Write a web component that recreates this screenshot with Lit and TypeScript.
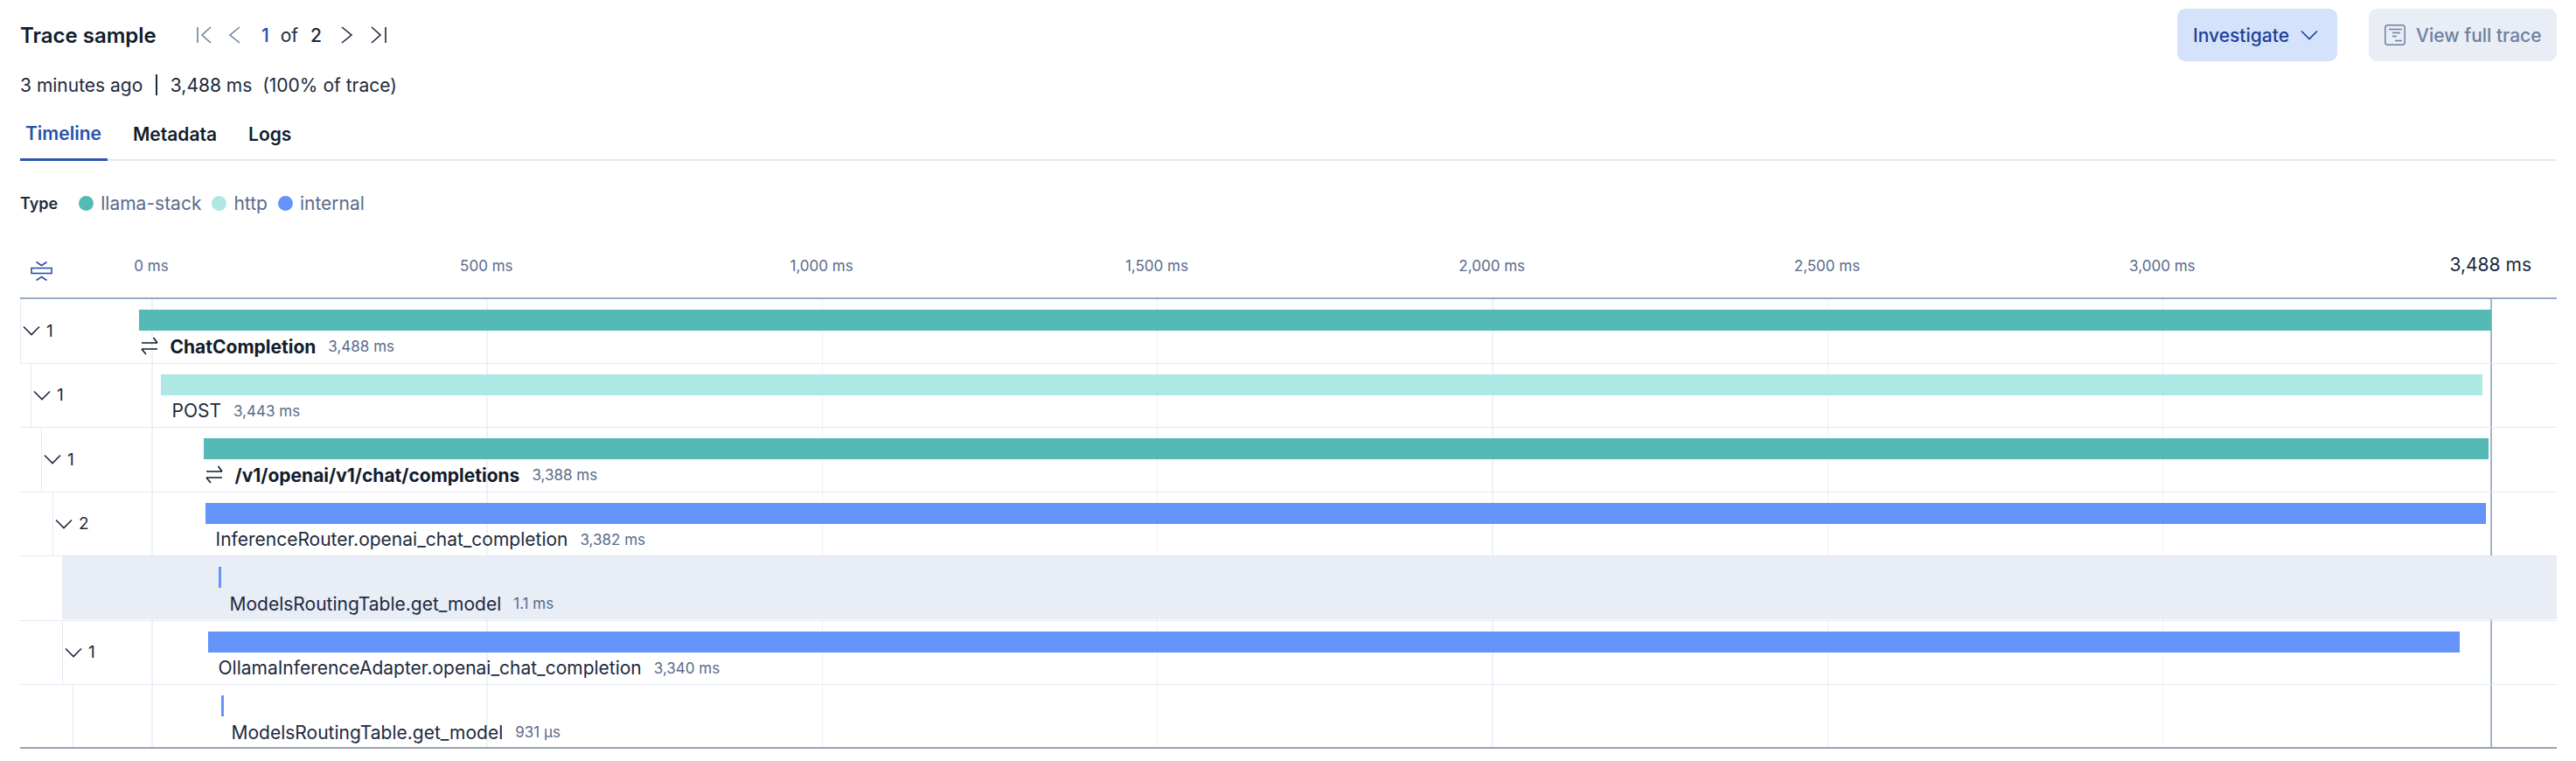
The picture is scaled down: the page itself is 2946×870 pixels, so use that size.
import { LitElement, html, css, svg } from 'lit';
import { customElement } from 'lit/decorators.js';

type Span = {
  indent: number;
  count?: number;
  color: string;
  x: number;
  end: number;
  labelX: number;
  name: string;
  duration: string;
  bold?: boolean;
  swap?: boolean;
  selected?: boolean;
};

const TEAL = '#55b9b5';
const MINT = '#ade8e4';
const BLUE = '#6494fa';
const LANE_X = 150;

const spans: Span[] = [
  { indent: 23, count: 1, color: TEAL, x: 159, end: 2849, labelX: 161, name: 'ChatCompletion', duration: '3,488 ms', bold: true, swap: true },
  { indent: 35, count: 1, color: MINT, x: 184, end: 2839, labelX: 197, name: 'POST', duration: '3,443 ms' },
  { indent: 47, count: 1, color: TEAL, x: 233, end: 2846, labelX: 235, name: '/v1/openai/v1/chat/completions', duration: '3,388 ms', bold: true, swap: true },
  { indent: 60, count: 2, color: BLUE, x: 235, end: 2843, labelX: 247, name: 'InferenceRouter.openai_chat_completion', duration: '3,382 ms' },
  { indent: 71, color: BLUE, x: 250, end: 253, labelX: 263, name: 'ModelsRoutingTable.get_model', duration: '1.1 ms', selected: true },
  { indent: 71, count: 1, color: BLUE, x: 238, end: 2813, labelX: 250, name: 'OllamaInferenceAdapter.openai_chat_completion', duration: '3,340 ms' },
  { indent: 83, color: BLUE, x: 253, end: 256, labelX: 265, name: 'ModelsRoutingTable.get_model', duration: '931 µs' },
];

const ticks = ['0 ms', '500 ms', '1,000 ms', '1,500 ms', '2,000 ms', '2,500 ms', '3,000 ms'];
const legend = [
  { label: 'llama-stack', color: TEAL },
  { label: 'http', color: MINT },
  { label: 'internal', color: BLUE },
];
const tickX = (i: number) => 150 + i * 383.3;

const chevron = (points: string) => html`<svg class="nav-icon" viewBox="0 0 24 24" fill="none" stroke="currentColor" stroke-width="1.6">${svg`<path d=${points}/>`}</svg>`;

@customElement('app-root')
export class AppRoot extends LitElement {
  static styles = css`
    :host {
      display: block;
      width: 2946px;
      height: 870px;
      box-sizing: border-box;
      padding: 10px 22px 0 23px;
      background: #fff;
      font-family: Inter, 'Liberation Sans', sans-serif;
      font-size: 21px;
      color: #1d2a3e;
    }
    svg {
      display: block;
      flex: none;
    }
    .top {
      display: flex;
      align-items: center;
      height: 60px;
    }
    .title {
      font-size: 24px;
      font-weight: 600;
      color: #111c2c;
      width: 202px;
    }
    .pager {
      display: flex;
      align-items: center;
      color: #1d2a3e;
    }
    .nav-icon {
      width: 24px;
      height: 24px;
    }
    .muted-icon {
      color: #6f80a0;
    }
    .gap-prev {
      width: 6px;
    }
    .gap-last {
      width: 13px;
    }
    .current {
      color: #2b4fa8;
      font-weight: 500;
      margin-left: 20px;
    }
    .of {
      margin-left: 13px;
    }
    .total {
      font-weight: 500;
      margin-left: 14px;
      margin-right: 16px;
    }
    .actions {
      margin-left: auto;
      display: flex;
      gap: 36px;
    }
    .btn {
      display: flex;
      align-items: center;
      height: 60px;
      border-radius: 9px;
      box-sizing: border-box;
      font-weight: 500;
    }
    .btn.primary {
      width: 183px;
      padding-left: 18px;
      gap: 13px;
      background: #d4e3fb;
      color: #1f3f98;
    }
    .btn.disabled {
      width: 215px;
      padding-left: 18px;
      gap: 12px;
      background: #e9edf5;
      color: #6f80a0;
    }
    .meta {
      display: flex;
      align-items: center;
      height: 32px;
      margin-top: 11px;
      white-space: pre;
    }
    .divider {
      width: 1.5px;
      height: 24px;
      background: #1d2a3e;
      margin: 0 15px;
    }
    .tabs {
      display: flex;
      height: 58px;
      margin-top: 13px;
      box-sizing: border-box;
      border-bottom: 2px solid #e3e8f2;
    }
    .tab {
      box-sizing: border-box;
      height: 58px;
      padding: 0 7px 3px 6px;
      display: flex;
      align-items: center;
      font-weight: 600;
      color: #111c2c;
      margin-right: 23px;
    }
    .tab.active {
      color: #2b4fa8;
      border-bottom: 3px solid #2d55b5;
    }
    .legend {
      display: flex;
      align-items: center;
      height: 30px;
      margin-top: 33px;
      color: #5a6b8c;
    }
    .legend b {
      font-weight: 600;
      color: #1d2a3e;
      margin-right: 24px;
      font-size: 18px;
    }
    .legend-item {
      display: flex;
      align-items: center;
      gap: 8px;
      margin-right: 12px;
    }
    .dot {
      width: 17px;
      height: 17px;
      border-radius: 50%;
    }
    .axis {
      position: relative;
      height: 95px;
      box-sizing: border-box;
      border-bottom: 2px solid #98a8c8;
    }
    .collapse {
      position: absolute;
      left: 12px;
      top: 51px;
      color: #2b4fa8;
    }
    .tick {
      position: absolute;
      top: 46px;
      font-size: 17px;
      line-height: 22px;
      color: #5a6b8c;
      transform: translateX(-50%);
      white-space: nowrap;
    }
    .total-tick {
      position: absolute;
      right: 29px;
      top: 42px;
      font-size: 21px;
      line-height: 28px;
    }
    .rows {
      position: relative;
      border-bottom: 2px solid #98a2b3;
    }
    .gridline {
      position: absolute;
      top: 0;
      bottom: 0;
      width: 1.5px;
      background: #eef1f6;
    }
    .endline {
      position: absolute;
      top: 0;
      bottom: 0;
      left: 2825px;
      width: 2px;
      background: #a8b3c9;
    }
    .row {
      position: relative;
      display: flex;
      height: 73.5px;
      box-sizing: border-box;
      border-bottom: 1.5px solid #e3e8f2;
    }
    .row:last-of-type {
      height: 71px;
      border-bottom: none;
    }
    .row-inner {
      flex: 1;
      display: flex;
      min-width: 0;
      border-left: 1.5px solid #e3e8f2;
    }
    .row-inner.selected {
      background: #e8edf6;
      border-left-color: #e8edf6;
      margin-bottom: 1px;
    }
    .toggle {
      display: flex;
      align-items: center;
      gap: 6px;
      box-sizing: border-box;
      flex: none;
      padding: 0 0 0 1px;
      font-size: 19px;
    }
    .lane {
      flex: 1;
      min-width: 0;
      padding-top: 12px;
    }
    .bar {
      height: 24px;
    }
    .label {
      display: flex;
      align-items: center;
      height: 30px;
      margin-top: 3px;
      white-space: nowrap;
    }
    .name.bold {
      font-weight: 700;
      color: #111c2c;
    }
    .swap {
      margin-right: 14px;
      color: #111c2c;
    }
    .duration {
      font-size: 17px;
      color: #5a6b8c;
      margin-left: 14px;
    }
  `;

  renderRow(s: Span) {
    const offset = s.indent - 23;
    const toggleWidth = LANE_X + 23 - s.indent - 1.5;
    const selected = s.selected ? 'row-inner selected' : 'row-inner';
    return html`
      <div class="row" style="padding-left:${offset}px">
        <div class=${selected}>
          <div class="toggle" style="width:${toggleWidth}px">
            ${s.count
              ? html`<svg width="22" height="22" viewBox="0 0 22 22" fill="none" stroke="#1d2a3e" stroke-width="1.6"><path d="M2 6.5l9 9 9-9"/></svg><span>${s.count}</span>`
              : ''}
          </div>
          <div class="lane">
            <div class="bar" style="margin-left:${s.x - LANE_X - 23}px;width:${s.end - s.x}px;background:${s.color}"></div>
            <div class="label" style="margin-left:${s.labelX - LANE_X - 23}px">
              ${s.swap
                ? html`<svg class="swap" width="20" height="24" viewBox="0 0 20 24" fill="none" stroke="currentColor" stroke-width="1.6"><path d="M1 8h18M14.5 2l4.5 6M19 15H1M6 21l-5-6"/></svg>`
                : ''}
              <span class="name ${s.bold ? 'bold' : ''}">${s.name}</span>
              <span class="duration">${s.duration}</span>
            </div>
          </div>
        </div>
      </div>
    `;
  }

  render() {
    return html`
      <div class="top">
        <div class="title">Trace sample</div>
        <div class="pager">
          <span class="muted-icon">${chevron('M1 3v18M16 3L6 12l10 9')}</span>
          <span class="gap-prev"></span>
          <span class="muted-icon">${chevron('M19 3L8 12l11 9')}</span>
          <span class="current">1</span>
          <span class="of">of</span>
          <span class="total">2</span>
          ${chevron('M7 3l11 9-11 9')}
          <span class="gap-last"></span>
          ${chevron('M4 3l10 9-10 9M20 3v18')}
        </div>
        <div class="actions">
          <div class="btn primary">
            Investigate
            <svg width="20" height="20" viewBox="0 0 20 20" fill="none" stroke="currentColor" stroke-width="1.6"><path d="M1 5.5l9 9 9-9"/></svg>
          </div>
          <div class="btn disabled">
            <svg width="24" height="24" viewBox="0 0 24 24" fill="none" stroke="currentColor" stroke-width="1.5"><rect x=".8" y=".8" width="22.4" height="22.4" rx="3"/><path d="M5 5.5h15M9 9.5h9M9 13.5h5M12 18.5h8"/></svg>
            View full trace
          </div>
        </div>
      </div>
      <div class="meta">3 minutes ago<span class="divider"></span>3,488 ms  (100% of trace)</div>
      <div class="tabs">
        <div class="tab active">Timeline</div>
        <div class="tab">Metadata</div>
        <div class="tab">Logs</div>
      </div>
      <div class="legend">
        <b>Type</b>
        ${legend.map(
          (l) => html`<div class="legend-item"><span class="dot" style="background:${l.color}"></span>${l.label}</div>`,
        )}
      </div>
      <div class="axis">
        <svg class="collapse" width="25" height="24" viewBox="0 0 25 24" fill="none" stroke="currentColor" stroke-width="1.6"><path d="M6.5 1.5l6 4 6-4M6.5 22.5l6-4 6 4"/><rect x="1" y="8.5" width="23" height="6"/></svg>
        ${ticks.map(
          (t, i) => html`<span class="tick" style="left:${tickX(i)}px">${t}</span>`,
        )}
        <span class="total-tick">3,488 ms</span>
      </div>
      <div class="rows">
        ${ticks.map((_, i) => html`<div class="gridline" style="left:${tickX(i)}px"></div>`)}
        <div class="endline"></div>
        ${spans.map((s) => this.renderRow(s))}
      </div>
    `;
  }
}
